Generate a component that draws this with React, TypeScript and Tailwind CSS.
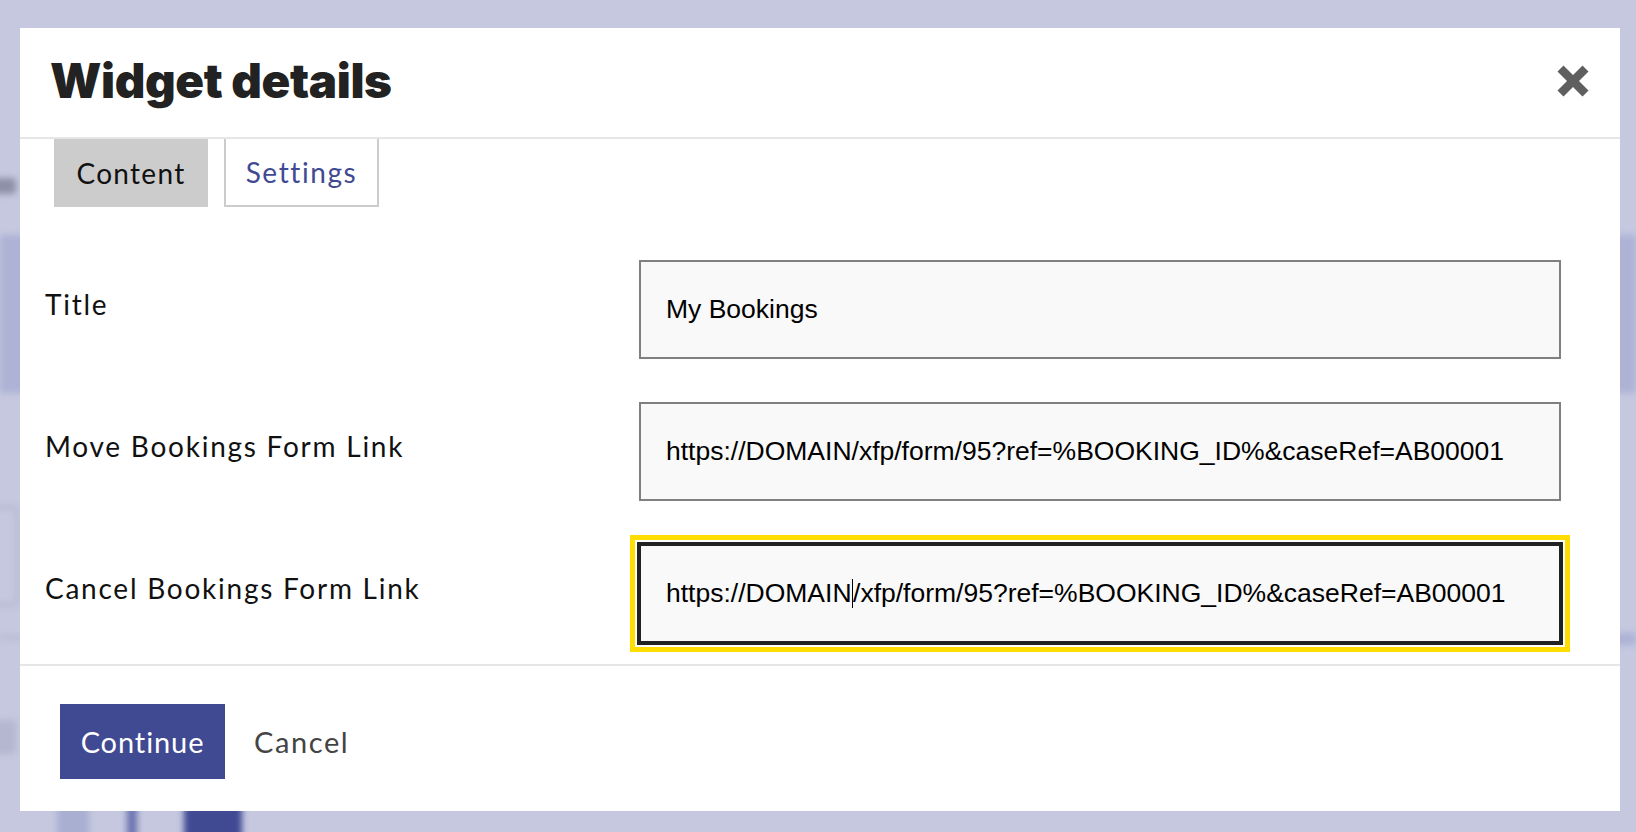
import React from "react";

function CloseIcon() {
  return (
    <svg width="32" height="32" viewBox="0 0 32 32" aria-hidden="true">
      <path
        d="M6.5 0.5 L16 10 L25.5 0.5 L31.5 6.5 L22 16 L31.5 25.5 L25.5 31.5 L16 22 L6.5 31.5 L0.5 25.5 L10 16 L0.5 6.5 Z"
        fill="#5f5f5f"
      />
    </svg>
  );
}

const URL = "https://DOMAIN/xfp/form/95?ref=%BOOKING_ID%&caseRef=AB00001";

export default function App() {
  const label = "text-[28px] tracking-[1.75px] text-[#111] pb-[11px]";
  const inputFont = { fontFamily: "'Liberation Sans', Arial, sans-serif" };
  return (
    <div
      className="relative w-full h-[832px] overflow-hidden bg-[#c5c8df]"
      style={{ fontFamily: "Lato, 'Open Sans', sans-serif" }}
    >
      {/* blurred page behind the dialog */}
      <div className="absolute inset-0 blur-[3px]">
        <div className="absolute left-0 right-0 top-[235px] h-[158px] bg-[#aeb2d5]" />
        <div className="absolute left-[-10px] top-[178px] w-[26px] h-[16px] bg-[#8e90a8] rounded" />
        <div className="absolute left-[-10px] top-[506px] w-[28px] h-[100px] border-2 border-[#a9acc6] rounded-md" />
        <div className="absolute left-0 top-[636px] w-[30px] h-[3px] bg-[#b3b6cc]" />
        <div className="absolute left-[-6px] top-[720px] w-[22px] h-[34px] bg-[#b4b7cf] rounded" />
        <div className="absolute left-[57px] top-[800px] w-[32px] h-[40px] bg-[#a9afd1]" />
        <div className="absolute left-[127px] top-[800px] w-[10px] h-[40px] bg-[#6a73b0]" />
        <div className="absolute left-[184px] top-[800px] w-[58px] h-[40px] bg-[#3f4a93]" />
        <div className="absolute right-0 top-[633px] w-[30px] h-[12px] bg-[#aeb2d5]" />
      </div>

      {/* dialog */}
      <div className="relative ml-[20px] mt-[28px] w-[1600px] h-[783px] bg-white flex flex-col">
        <div className="h-[111px] flex items-center justify-between pl-[30px] pr-[31px] border-b-2 border-[#e6e6e6] shrink-0">
          <h1
            className="text-[47.5px] font-black text-[#222] tracking-[-0.4px] leading-none pb-[4px]"
            style={{ fontFamily: "Inter, Lato, sans-serif" }}
          >
            Widget details
          </h1>
          <button className="pb-[3px]" aria-label="Close">
            <CloseIcon />
          </button>
        </div>

        <div className="flex gap-[16px] pl-[34px] h-[68px] shrink-0">
          <div className="w-[154px] h-full bg-[#cccccc] flex items-center justify-center text-[28px] tracking-[1.3px] text-[#111]">
            Content
          </div>
          <div className="w-[155px] h-full border-2 border-t-0 border-[#cccccc] flex items-center justify-center text-[28px] tracking-[1.6px] text-[#3f4a93]">
            Settings
          </div>
        </div>

        <div className="flex flex-col gap-[43px] pt-[53px] pb-[21px] pr-[59px] border-b-2 border-[#e6e6e6]">
          <div className="flex items-center">
            <div className={`w-[619px] pl-[25px] ${label}`}>Title</div>
            <input
              readOnly
              defaultValue="My Bookings"
              className="w-[922px] h-[99px] border-2 border-[#808080] bg-[#f9f9f9] pl-[25px] text-[26.5px] text-black outline-none"
              style={inputFont}
            />
          </div>
          <div className="flex items-center">
            <div className={`w-[619px] pl-[25px] ${label}`}>Move Bookings Form Link</div>
            <input
              readOnly
              defaultValue={URL}
              className="w-[922px] h-[99px] border-2 border-[#808080] bg-[#f9f9f9] pl-[25px] text-[26.5px] text-black outline-none"
              style={inputFont}
            />
          </div>
          <div className="flex items-center">
            <div className={`w-[619px] pl-[25px] ${label}`}>Cancel Bookings Form Link</div>
            <div
              className="relative w-[922px] h-[99px] border-2 border-[#222] bg-[#f9f9f9] pl-[25px] flex items-center text-[26.5px] text-black shadow-[0_0_0_2px_#222,0_0_0_4px_#fff,0_0_0_9px_#ffdd00]"
              style={inputFont}
            >
              <span>https://DOMAIN</span>
              <span className="inline-block w-[1.5px] h-[29px] bg-black" />
              <span>/xfp/form/95?ref=%BOOKING_ID%&amp;caseRef=AB00001</span>
            </div>
          </div>
        </div>

        <div className="flex items-center gap-[29px] pl-[40px] pt-[38px]">
          <button className="w-[165px] h-[75px] bg-[#3f4a93] text-white text-[29px] tracking-[0.9px]">
            Continue
          </button>
          <button className="text-[29px] tracking-[1.6px] text-[#444]">Cancel</button>
        </div>
      </div>
    </div>
  );
}
